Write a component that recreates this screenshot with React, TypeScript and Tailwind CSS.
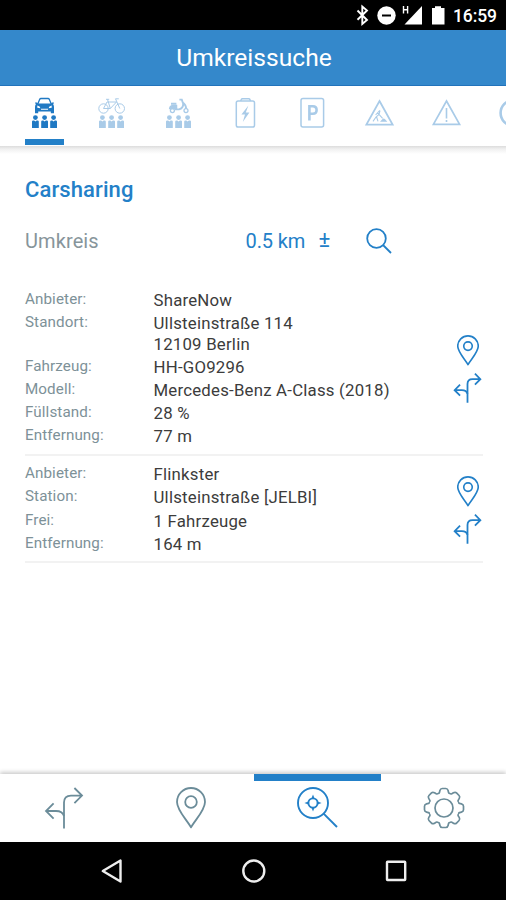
import { ReactNode } from 'react'

type IconProps = { className?: string }

const People = () => (
  <g fill="currentColor" stroke="none">
    {[3, 12.2, 21.2].map((x) => (
      <g key={x} transform={`translate(${x} 19)`}>
        <circle cx="3.4" cy="2.6" r="2.4" />
        <path d="M0 6.6Q0 5.4 1.2 5.4H2.2L3.4 6.6 4.6 5.4H5.6Q6.8 5.4 6.8 6.6V13H0Z" />
      </g>
    ))}
  </g>
)

const TabIcon = ({ children }: { children: ReactNode }) => (
  <svg viewBox="0 0 31 34" className="h-[34px] w-[31px]" fill="none" stroke="currentColor" strokeWidth="1.3">
    {children}
  </svg>
)

const CarIcon = () => (
  <TabIcon>
    <path d="M8.7 8.2L10.6 3.4Q11 2.5 12 2.5H19Q20 2.5 20.4 3.4L22.3 8.2" />
    <path
      fill="currentColor"
      stroke="none"
      fillRule="evenodd"
      d="M6 6.4H8L9 7.6H22L23 6.4H25L24.2 8.6Q25 9.6 25 11V17.2H21.8V15.6H9.2V17.2H6V11Q6 9.6 6.8 8.6ZM8.3 9.6V11.8L11.4 12.3 10.6 10.4ZM22.7 9.6V11.8L19.6 12.3 20.4 10.4ZM12 12.8H19V13.7H12Z"
    />
    <People />
  </TabIcon>
)

const BikeIcon = () => (
  <TabIcon>
    <g strokeWidth="1">
      <circle cx="7.5" cy="12.5" r="4.7" />
      <circle cx="23.8" cy="12.5" r="4.7" />
      <path d="M7.5 12.5L11 6H20.5L14.3 12.5H7.5M10 3.3H13.2M11.5 3.3L14.3 12.5M23.8 12.5L19.5 2.8H22.8" />
    </g>
    <People />
  </TabIcon>
)

const ScooterIcon = () => (
  <TabIcon>
    <circle cx="9.4" cy="14.6" r="2" />
    <circle cx="23" cy="14.6" r="2" />
    <path fill="currentColor" d="M6.6 12.6Q7 9.4 10.5 9.4H13.6V12.6Z" />
    <path strokeWidth="1.9" d="M8 7.8H13.4M12 13.4H16Q20.4 12.4 20.2 7.8L18.8 3.6H16.4M19.8 6.6Q23 9 23.2 13" />
    <People />
  </TabIcon>
)

const BatteryIcon = () => (
  <TabIcon>
    <path d="M10.6 5L11.4 3.4Q11.7 2.7 12.4 2.7H18.8Q19.5 2.7 19.8 3.4L20.6 5" strokeWidth="1.6" />
    <rect x="6.3" y="5" width="18.2" height="26" rx="1.8" strokeWidth="1.5" />
    <path fill="currentColor" stroke="none" d="M18.4 9.5L11.4 18.4H15L12.8 26 19.4 16.4H15.8Z" />
  </TabIcon>
)

const ParkingIcon = () => (
  <TabIcon>
    <rect x="4" y="2.6" width="22.6" height="28.4" rx="2" strokeWidth="1.5" />
    <path strokeWidth="2.6" d="M12.4 24.4V10.2H15.8Q19.6 10.2 19.6 14T15.8 17.8H12.4" />
  </TabIcon>
)

const RoadworksIcon = () => (
  <TabIcon>
    <path strokeWidth="1.8" d="M15.5 5L28.6 28.6H2.4Z" />
    <path strokeWidth="1.1" d="M16 14.5L15 18.5 12 21 9 25.4M13.4 16.6L18.6 22.4M12.6 21L14 25.4M15.6 14.5L11.6 19" />
    <path fill="currentColor" stroke="none" d="M16 25.8L18.8 22.8Q20 22.2 21 23.2L23.4 25.8Z" />
  </TabIcon>
)

const WarningIcon = () => (
  <TabIcon>
    <path strokeWidth="1.7" d="M15.5 5L28.6 28.4H2.4Z" />
    <path strokeWidth="1.6" d="M15.5 12V22.6M15.5 24V26" />
  </TabIcon>
)

const RingIcon = () => (
  <TabIcon>
    <circle cx="15.5" cy="17" r="12.9" strokeWidth="2.6" />
  </TabIcon>
)

const PinIcon = ({ className }: IconProps) => (
  <svg viewBox="0 0 30 42" className={className} fill="none" stroke="currentColor">
    <path d="M15 40.4C11 33 1 23.5 1 15A14 14 0 0 1 29 15C29 23.5 19 33 15 40.4Z" strokeLinejoin="round" />
    <circle cx="15" cy="15" r="5.8" />
  </svg>
)

const RouteIcon = ({ className }: IconProps) => (
  <svg viewBox="0 0 40 42" className={className} fill="none" stroke="currentColor">
    <path d="M20 41.5V15.5Q20 8.6 27 8.6H38M30.4 1L38 8.6L30.4 16.2" />
    <path d="M20 29Q18.5 24 12 24H2M9.6 16.4L2 24L9.6 31.6" />
  </svg>
)

const SearchNearIcon = ({ className }: IconProps) => (
  <svg viewBox="0 0 42 42" className={className} fill="none" stroke="currentColor" strokeWidth="1.9">
    <circle cx="16" cy="16" r="15" />
    <path d="M26.6 26.6L40 40" />
    <circle cx="16" cy="16" r="4.6" />
    <path fill="currentColor" stroke="none" d="M14.2 12L16 7.4 17.8 12ZM14.2 20L16 24.6 17.8 20ZM12 14.2L7.4 16 12 17.8ZM20 14.2L24.6 16 20 17.8Z" />
  </svg>
)

const GearIcon = ({ className }: IconProps) => (
  <svg viewBox="-21 -21 42 42" className={className} fill="none" stroke="currentColor" strokeWidth="1.7">
    <circle r="9" />
    {[0, 45, 90, 135, 180, 225, 270, 315].map((a) => (
      <path
        key={a}
        transform={`rotate(${a})`}
        d="M-6.1 -14.8C-4.4 -14.2 -4.5 -16 -4.1 -17.4Q-3.5 -19.5 -1.8 -19.5H1.8Q3.5 -19.5 4.1 -17.4C4.5 -16 4.4 -14.2 6.1 -14.8"
      />
    ))}
  </svg>
)

const StatusBar = () => (
  <div className="flex h-[30px] shrink-0 items-center justify-end bg-black pr-[9px] text-white">
    <svg viewBox="0 0 90 24" className="mr-[7px] h-6 w-[90px]" fill="none" stroke="white">
      <path strokeWidth="1.9" d="M1.5 7.5L11 17L6.3 21V3.5L11 7.5L1.5 16.8" />
      <circle cx="30.5" cy="12.5" r="9.2" fill="white" stroke="none" />
      <path d="M26 12.5H35" stroke="black" strokeWidth="2" />
      <path d="M66 3V21.5H48.5Z" fill="white" stroke="none" />
      <path d="M47.5 3V10.5M51.6 3V10.5M47.5 6.8H51.6" strokeWidth="1.4" />
      <path d="M76 5H79V3.2H85V5H88.5V21.5H76Z" fill="white" stroke="none" />
    </svg>
    <span className="mt-[2px] w-[44px] whitespace-nowrap text-[17.5px] font-medium tracking-[-0.1px]">16:59</span>
  </div>
)

const tabs = [CarIcon, BikeIcon, ScooterIcon, BatteryIcon, ParkingIcon, RoadworksIcon, WarningIcon, RingIcon]

const Tabs = () => (
  <div className="z-10 flex h-[60px] shrink-0 overflow-hidden bg-white pl-[11px]">
    {tabs.map((Icon, index) => (
      <div
        key={index}
        className={
          'flex w-[67px] shrink-0 flex-col items-center justify-between pt-[10px] ' +
          (index === 0 ? 'text-[#2079c3]' : 'text-[#a9cbe8]')
        }
      >
        <Icon />
        <div className={'mb-px h-[6px] w-[39px] ' + (index === 0 ? 'bg-[#2380c8]' : '')} />
      </div>
    ))}
  </div>
)

type Entry = { label: string; lines: string[] }

const results: Entry[][] = [
  [
    { label: 'Anbieter:', lines: ['ShareNow'] },
    { label: 'Standort:', lines: ['Ullsteinstraße 114', '12109 Berlin'] },
    { label: 'Fahrzeug:', lines: ['HH-GO9296'] },
    { label: 'Modell:', lines: ['Mercedes-Benz A-Class (2018)'] },
    { label: 'Füllstand:', lines: ['28 %'] },
    { label: 'Entfernung:', lines: ['77 m'] },
  ],
  [
    { label: 'Anbieter:', lines: ['Flinkster'] },
    { label: 'Station:', lines: ['Ullsteinstraße [JELBI]'] },
    { label: 'Frei:', lines: ['1 Fahrzeuge'] },
    { label: 'Entfernung:', lines: ['164 m'] },
  ],
]

const Result = ({ entries }: { entries: Entry[] }) => (
  <div className="flex items-center justify-between border-b-2 border-[#f2f2f2] pb-[5.5px] pt-[7px]">
    <dl className="flex flex-col">
      {entries.map(({ label, lines }) => (
        <div key={label} className="flex pb-[1.7px]">
          <dt className="w-[128.5px] text-[15.2px] leading-[20.5px] tracking-[0.1px] text-[#7d9198]">{label}</dt>
          <dd className="pt-px text-[16.8px] leading-[20.5px] tracking-[0.22px] text-[#3c3c3c]">
            {lines.map((line) => (
              <div key={line}>{line}</div>
            ))}
          </dd>
        </div>
      ))}
    </dl>
    <div className="mr-px flex flex-col items-center gap-[7px] pt-px text-[#2380c8]">
      <PinIcon className="h-[31px] w-[22px] stroke-[2.2]" />
      <RouteIcon className="h-[30px] w-[29px] stroke-[2.5]" />
    </div>
  </div>
)

const BottomNav = () => (
  <nav className="z-10 grid h-[68px] shrink-0 grid-cols-[127px_127px_127px_125px] bg-white text-[#6b8c99] shadow-[0_-2px_4px_rgba(0,0,0,0.2)]">
    <div className="flex justify-center pt-[13px]">
      <RouteIcon className="h-[42px] w-[40px] stroke-[1.8]" />
    </div>
    <div className="flex justify-center pt-[13px]">
      <PinIcon className="h-[42px] w-[30px] stroke-[1.8]" />
    </div>
    <div className="flex flex-col items-center text-[#2380c8]">
      <div className="h-[7px] w-full bg-[#2380c8]" />
      <SearchNearIcon className="mt-[6px] h-[42px] w-[42px]" />
    </div>
    <div className="flex justify-center pt-[13px]">
      <GearIcon className="h-[42px] w-[42px]" />
    </div>
  </nav>
)

const SystemNav = () => (
  <div className="flex h-[58px] shrink-0 items-center bg-black pl-[101px]">
    <svg viewBox="0 0 306 26" className="h-[26px] w-[306px]" fill="none" stroke="#eee" strokeWidth="2.4">
      <path d="M19.5 2.5V23.5L1.8 13Z" strokeLinejoin="round" />
      <circle cx="152.8" cy="13" r="10.5" />
      <rect x="286" y="3.8" width="18.2" height="18.2" rx="0.5" />
    </svg>
  </div>
)

const App = () => {
  return (
    <div className="flex h-[900px] w-[506px] flex-col overflow-hidden bg-white font-['Roboto',sans-serif]">
      <StatusBar />
      <header className="flex h-[56px] shrink-0 items-center justify-center border-b border-[#2273bb] bg-[#3488cb] pt-[2px] pl-[2px] text-[24.6px] text-white">
        Umkreissuche
      </header>
      <Tabs />
      <main className="flex grow flex-col bg-[linear-gradient(#dcdcdc,#f0f0f0_3px,#fff_8px)] pl-[25px] pr-[23px]">
        <h1 className="mt-[30px] text-[22px] font-medium leading-7 tracking-[0.1px] text-[#2380c8]">Carsharing</h1>
        <div className="mt-[22px] flex h-[30px] items-center text-[20px] text-[#2380c8]">
          <span className="w-[220.5px] tracking-[0.1px] text-[#87959b]">Umkreis</span>
          <span className="w-[73px] tracking-[-0.1px]">0.5 km</span>
          <span className="-mt-[3px] w-[47.5px] text-[22px]">±</span>
          <svg viewBox="0 0 26 26" className="h-[26px] w-[26px]" fill="none" stroke="currentColor" strokeWidth="1.8">
            <circle cx="10.5" cy="10.5" r="9.3" />
            <path d="M17 17L25 25" />
          </svg>
        </div>
        <div className="mt-[26px]">
          {results.map((entries, index) => (
            <Result key={index} entries={entries} />
          ))}
        </div>
      </main>
      <BottomNav />
      <SystemNav />
    </div>
  )
}

export default App
